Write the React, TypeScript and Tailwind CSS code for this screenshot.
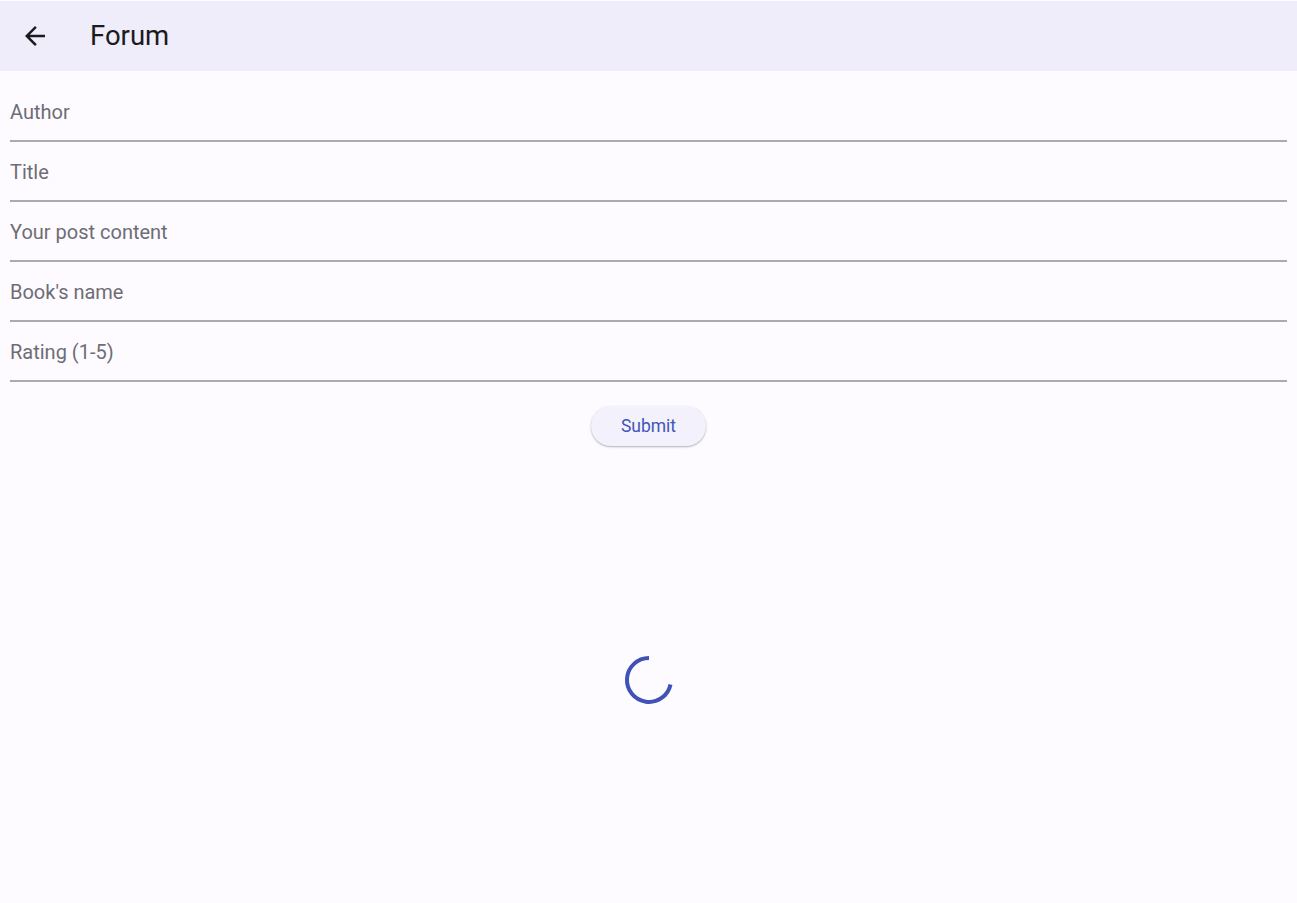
const FIELDS = ['Author', 'Title', 'Your post content', "Book's name", 'Rating (1-5)']

export default function App() {
  return (
    <div className="min-h-screen w-full bg-[#fdfbff] flex flex-col" style={{ fontFamily: 'Roboto, "Noto Sans", sans-serif' }}>
      <header className="h-[71px] bg-[#eeedf9] flex items-center border-t border-[#fdfbff]">
        <button className="ml-[20px] w-[30px] h-[30px] flex items-center justify-center text-[#1b1b1f]">
          <svg width="30" height="30" viewBox="0 0 24 24" fill="currentColor">
            <path d="M20 11H7.83l5.59-5.59L12 4l-8 8 8 8 1.41-1.41L7.83 13H20v-2z" />
          </svg>
        </button>
        <h1 className="ml-[40px] text-[27.5px] text-[#1b1b1f] leading-none">Forum</h1>
      </header>

      <div className="px-[10px] pt-[11px] flex flex-col">
        {FIELDS.map((f) => (
          <div key={f} className="h-[60px] flex items-end pb-[16px] border-b-2 border-[#aca9b2]">
            <span className="text-[20px] text-[#6e6d75] leading-[23px]">{f}</span>
          </div>
        ))}
      </div>

      <div className="flex justify-center mt-[24px]">
        <button className="w-[115px] h-[40px] rounded-full bg-[#f3f1fb] text-[#4355b9] text-[17.5px] shadow-[0_1px_2px_rgba(0,0,0,0.3)]">
          Submit
        </button>
      </div>

      <div className="flex-1 flex items-center justify-center pt-[11px]">
        <svg width="52" height="52" viewBox="0 0 52 52">
          <path
            d="M 26 4 A 22 22 0 1 0 47.5 30.5"
            fill="none"
            stroke="#4052b5"
            strokeWidth="4"
          />
        </svg>
      </div>
    </div>
  )
}
